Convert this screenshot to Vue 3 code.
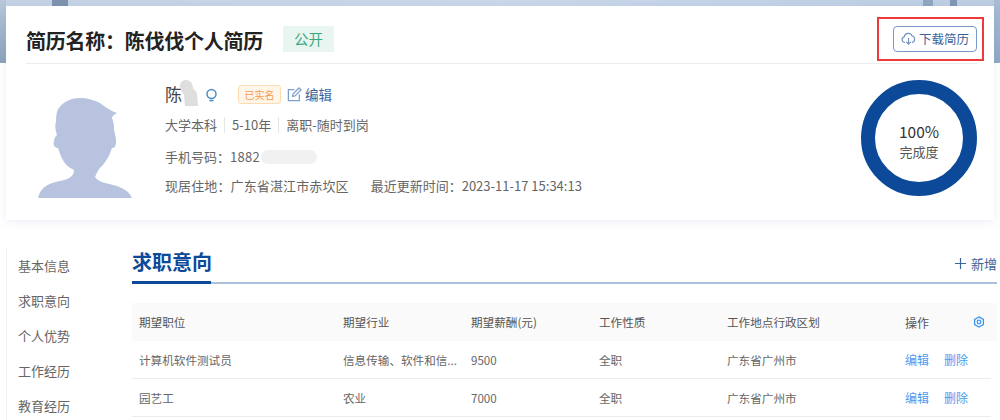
<script setup>
const rows = [
  { job: '计算机软件测试员', industry: '信息传输、软件和信...', pay: '9500', type: '全职', area: '广东省广州市' },
  { job: '园艺工', industry: '农业', pay: '7000', type: '全职', area: '广东省广州市' }
]
const nav = ['基本信息', '求职意向', '个人优势', '工作经历', '教育经历']
</script>

<template>
  <div class="page">
    <section class="card">
      <header class="head">
        <h1 class="title">简历名称：陈伐伐个人简历</h1>
        <span class="public">公开</span>
        <button class="dl">
          <svg width="15" height="15" viewBox="0 0 16 16" fill="none" stroke="#6f93c4" stroke-width="1.2">
            <path d="M4.3 12.2H3.8A3 3 0 0 1 3.4 6.3 4.4 4.4 0 0 1 11.9 5.4 3.5 3.5 0 0 1 12 12.2H11.6" />
            <path d="M8 7.2V14M5.6 11.6 8 14l2.4-2.4" />
          </svg>
          下载简历
          <i class="dl-mark"></i>
        </button>
      </header>
      <div class="profile">
        <svg class="avatar" width="94" height="100" viewBox="0 0 94 100">
          <path fill="#b7c3df" d="M0 100C2 92 6 88 14 85 24 82 36 82 36 72 30 69 27 66 25 62 22 57 21 52 20 50 16 50 15 46 16 43 16 40 18 38 19 37 17 30 17 27 18 24 18 17 19 12 21 10 26 3 34 0 42 0 50 0 56 2 62 5 67 9 73 13 79 15 76 17 74 18 74 20 76 25 76 29 76 32 77 36 78 40 78 44 78 49 76 50 74 50 72 56 69 62 65 67 60 71 59 75 57 79 60 84 68 85 75 87 84 89 91 93 94 100Z" />
        </svg>
        <div class="info">
          <div class="name-row">
            <span class="name-wrap">
              <span class="name">陈</span>
              <svg class="smudge" width="19" height="26" viewBox="0 0 19 26"><path fill="#dedede" d="M1 6C1 2 4 0 7 0 11 0 14 3 14 8 15 10 18 11 18 15L19 26H6L5 15C3 12 1 10 1 6Z" /></svg>
            </span>
            <svg class="bulb" width="13" height="15" viewBox="0 0 13 15" fill="none" stroke="#4a8bc4" stroke-width="1.5">
              <circle cx="6.5" cy="6" r="4.5" />
              <path d="M4.5 12.6h4" />
            </svg>
            <span class="verified">已实名</span>
            <svg class="pen" width="15" height="15" viewBox="0 0 15 15" fill="none" stroke="#7f9fcc" stroke-width="1.3">
              <path d="M7.5 2.6H1.4v11h11V7.4" />
              <path d="M5.6 9.5 6 7 12 1l2 2-6 6Z" />
            </svg>
            <span class="edit">编辑</span>
          </div>
          <div class="facts">
            <span>大学本科</span><span>5-10年</span><span>离职-随时到岗</span>
          </div>
          <div class="line phone-line">手机号码：<span class="phone">1882<i class="blur"></i></span></div>
          <div class="line addr-line">
            <span class="addr">现居住地：广东省湛江市赤坎区</span>
            <span class="updated">最近更新时间：2023-11-17 15:34:13</span>
          </div>
        </div>
        <div class="ring">
          <b>100%</b>
          <span>完成度</span>
        </div>
      </div>
    </section>

    <div class="lower">
      <nav class="nav">
        <a v-for="n in nav" :key="n">{{ n }}</a>
      </nav>
      <main class="main">
        <div class="sec-head">
          <h2>求职意向</h2>
          <span class="add"><svg width="11" height="11" viewBox="0 0 12 12" stroke="#3a669f" stroke-width="1.3"><path d="M6 0v12M0 6h12" /></svg>新增</span>
        </div>
        <div class="table">
          <div class="row th">
            <span>期望职位</span><span>期望行业</span><span>期望薪酬(元)</span><span>工作性质</span><span>工作地点行政区划</span>
            <span class="ops">操作
              <svg width="12" height="12" viewBox="0 0 12 12" fill="none" stroke="#3f95ee" stroke-width="1.3">
                <path d="M6 .9 10.4 3.4v5.2L6 11.1 1.6 8.6V3.4Z" />
                <circle cx="6" cy="6" r="1.8" />
              </svg>
            </span>
          </div>
          <div class="row" v-for="r in rows" :key="r.job">
            <span>{{ r.job }}</span><span>{{ r.industry }}</span><span>{{ r.pay }}</span><span>{{ r.type }}</span><span>{{ r.area }}</span>
            <span class="ops act"><a>编辑</a><a>删除</a></span>
          </div>
        </div>
      </main>
    </div>
  </div>
</template>

<style>
html, body { margin: 0; background: #fff; overflow: hidden; }
</style>

<style scoped>
.page {
  width: 1000px; height: 420px; overflow: hidden; box-sizing: border-box; padding-top: 6px;
  font-family: "Noto Sans CJK SC", "Liberation Sans", sans-serif; color: #666;
  background:
    linear-gradient(#7d93b0, #7d93b0) 52px 0 / 16px 6px no-repeat,
    linear-gradient(#8fa5c0, #8fa5c0) 923px 0 / 10px 6px no-repeat,
    linear-gradient(#7f97b5, #7f97b5) 950px 0 / 7px 6px no-repeat,
    linear-gradient(180deg, #b7c8dc 0, #8ba2bb 100%) 0 0 / 6px 63px no-repeat,
    linear-gradient(180deg, #a9bdd6 0, #8fa8c4 100%) 994px 0 / 6px 63px no-repeat,
    linear-gradient(90deg, #c4d2e4 0, #c9d7e9 50%, #bccde2 100%) 0 0 / 100% 63px no-repeat;
}
.card {
  margin: 0 6px; height: 214px; box-sizing: border-box; padding: 0 17px 0 20px;
  background: #fff; box-shadow: 0 2px 8px rgba(70, 100, 190, .1);
}
.head { height: 58px; box-sizing: border-box; padding-top: 12px; display: flex; align-items: center; border-bottom: 1px solid #ebedf0; }
.title { margin: 0; font-size: 20px; line-height: 28px; font-weight: 700; color: #222; letter-spacing: -.25px; }
.public { margin: -4px 0 0 20px; width: 51px; height: 26px; line-height: 26px; text-align: center; background: #e8f5f0; color: #3aa981; font-size: 14.5px; }
.dl { position: relative; margin: -4px 0 0 auto; display: flex; align-items: center; justify-content: center; gap: 3px; width: 84px; height: 26px; padding: 0; box-sizing: border-box; background: #fff; border: 1px solid #7c9ac8; border-radius: 4px; font: 12.5px "Noto Sans CJK SC", sans-serif; color: #3b6297; }
.dl-mark { position: absolute; left: -17px; right: -8px; top: -10px; bottom: -10px; border: 2px solid #ee3a3c; }
.profile { display: flex; height: 156px; position: relative; }
.avatar { margin: 34px 0 0 12px; flex: none; }
.info { margin-left: 33px; flex: 1; }
.name-row { display: flex; align-items: center; height: 30px; margin-top: 15px; }
.name-wrap { position: relative; width: 40px; line-height: 30px; }
.name { font-size: 17px; color: #444; }
.smudge { position: absolute; left: 14px; top: 1px; }
.bulb { margin-right: 20px; margin-top: 3px; }
.verified { width: 41px; height: 17px; line-height: 17px; text-align: center; font-size: 10px; color: #f59a4a; background: #fff6e9; border: 1px solid #fcdcb0; border-radius: 3px; margin-right: 6px; }
.pen { margin-right: 3px; }
.edit { font-size: 13.5px; color: #3b6297; }
.facts { display: flex; font-size: 13px; height: 20px; line-height: 20px; margin-top: 6px; }
.facts span + span { margin-left: 7px; padding-left: 7px; border-left: 1px solid #e6e6e6; height: 16px; line-height: 16px; margin-top: 2px; }
.line { font-size: 13px; line-height: 18px; display: flex; }
.phone-line { margin-top: 13px; }
.addr-line { margin-top: 11px; }
.addr { letter-spacing: .12px; }
.phone { display: inline-flex; align-items: center; letter-spacing: .3px; }
.blur { display: block; width: 56px; height: 14px; margin-left: 1px; background: #f1f1f1; border-radius: 7px; }
.updated { margin-left: 22px; }
.ring { position: absolute; right: 0; top: 16px; width: 116px; height: 116px; box-sizing: border-box; padding-top: 6px; border: 14px solid #0c4a99; border-radius: 50%; display: flex; flex-direction: column; align-items: center; justify-content: center; }
.ring b { font-weight: 400; font-size: 15.5px; line-height: 22px; color: #333; }
.ring span { font-size: 13px; line-height: 20px; color: #555; }
.lower { display: flex; margin: 28px 3px 0 6px; }
.nav { width: 126px; flex: none; border-left: 1px solid #eef0f5; display: flex; flex-direction: column; padding-left: 11px; box-sizing: border-box; padding-top: 6px; }
.nav a { height: 35px; line-height: 24px; font-size: 13px; color: #666; }
.main { flex: 1; min-width: 0; }
.sec-head { display: flex; justify-content: space-between; height: 34px; border-bottom: 2px solid #a9bfdc; }
.sec-head h2 { margin: 0; font-size: 20px; line-height: 28px; color: #0c4a99; font-weight: 700; white-space: nowrap; height: 33px; width: 79px; border-bottom: 3px solid #0c4a99; }
.add { display: flex; align-items: center; gap: 5px; font-size: 13px; color: #3b6297; height: 28px; margin-top: 1px; }
.table { margin-top: 19px; font-size: 11.6px; }
.row { display: grid; grid-template-columns: 204px 128px 128px 128px 178px 92px; height: 38px; width: 859px; align-items: center; box-sizing: border-box; border-bottom: 1px solid #ececec; padding-left: 7px; }
.row.th { width: 865px; background: #fafafa; color: #555; border-bottom: 0; }
.ops { display: flex; justify-content: space-between; padding-right: 12px; align-items: center; font-size: 12px; }
.act { justify-content: flex-start; gap: 15px; }
.act a { color: #4a9af0; }
</style>
